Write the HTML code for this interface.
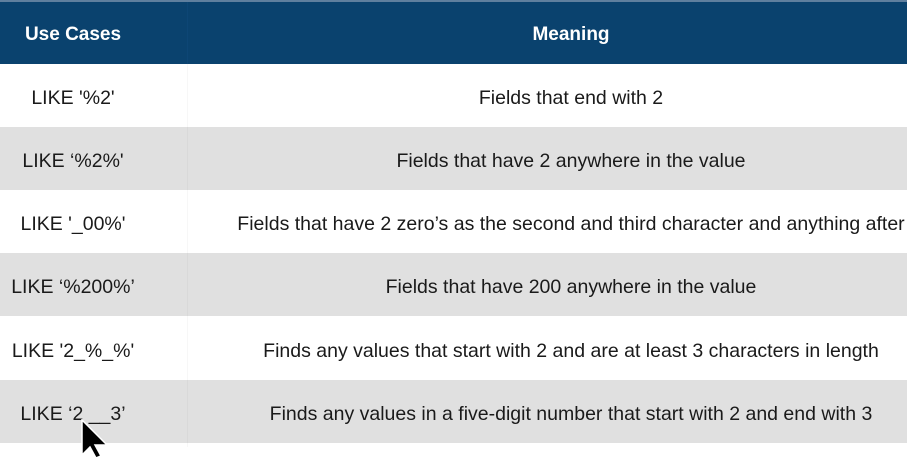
<!DOCTYPE html>
<html><head><style>
body{margin:0;width:907px;height:447px;overflow:hidden;background:#fff;font-family:"Liberation Sans",Arial,sans-serif;position:relative}
.r{position:absolute;left:0;width:907px}
.c{position:absolute;top:3px;height:100%;display:flex;align-items:center;justify-content:center;white-space:nowrap;font-size:19.5px;color:#1a1a1a}
.a{left:0;width:146px}
.b{left:236px;width:670px}
.h .c{color:#fff;font-weight:bold;font-size:19px;top:2px}
.g{background:#e0e0e0}
.sep{position:absolute;left:187px;top:64px;width:1px;height:383px;background:rgba(0,0,0,0.03)}
</style></head><body>
<div class="r h" style="top:0;height:2px;background:#5f7f9e"></div>
<div class="r h" style="top:2px;height:62px;background:#0a426e">
<div class="c a">Use Cases</div><div class="c b">Meaning</div>
<div style="position:absolute;left:187px;top:0;width:1px;height:62px;background:#0d4675"></div></div>
<div class="r" style="top:64px;height:63px"><div class="c a">LIKE '%2'</div><div class="c b">Fields that end with 2</div></div>
<div class="r g" style="top:127px;height:63px"><div class="c a">LIKE ‘%2%'</div><div class="c b">Fields that have 2 anywhere in the value</div></div>
<div class="r" style="top:190px;height:63px"><div class="c a">LIKE '_00%'</div><div class="c b">Fields that have 2 zero’s as the second and third character and anything after</div></div>
<div class="r g" style="top:253px;height:63px"><div class="c a">LIKE ‘%200%’</div><div class="c b">Fields that have 200 anywhere in the value</div></div>
<div class="r" style="top:316px;height:64px"><div class="c a">LIKE '2_%_%'</div><div class="c b">Finds any values that start with 2 and are at least 3 characters in length</div></div>
<div class="r g" style="top:380px;height:63px"><div class="c a">LIKE ‘2 __3’</div><div class="c b">Finds any values in a five-digit number that start with 2 and end with 3</div></div>
<div class="sep"></div>
<svg style="position:absolute;left:80px;top:419px" width="34" height="40" viewBox="0 0 34 40"><path d="M2 1 L2 36 L10 28 L16 39 L21 37 L15 26 L27 26 Z" fill="#000" stroke="#fff" stroke-width="1.5"/></svg>
</body></html>
